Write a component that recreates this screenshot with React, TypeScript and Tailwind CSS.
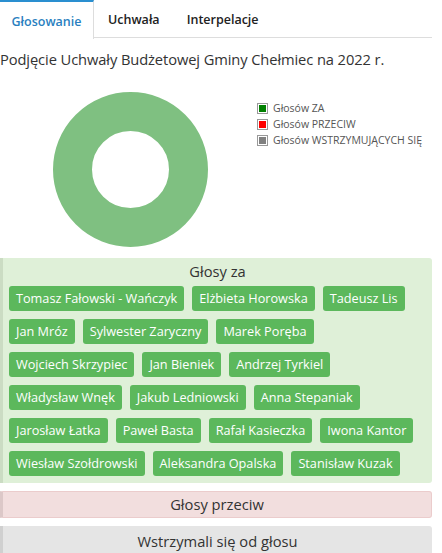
import React from "react";

const za = [
  "Tomasz Fałowski - Wańczyk",
  "Elżbieta Horowska",
  "Tadeusz Lis",
  "Jan Mróz",
  "Sylwester Zaryczny",
  "Marek Poręba",
  "Wojciech Skrzypiec",
  "Jan Bieniek",
  "Andrzej Tyrkiel",
  "Władysław Wnęk",
  "Jakub Ledniowski",
  "Anna Stepaniak",
  "Jarosław Łatka",
  "Paweł Basta",
  "Rafał Kasieczka",
  "Iwona Kantor",
  "Wiesław Szołdrowski",
  "Aleksandra Opalska",
  "Stanisław Kuzak",
];

export default function App() {
  return (
    <div className="w-[442px] h-[553px] overflow-hidden bg-white text-[#333]" style={{ fontFamily: '"Open Sans", sans-serif' }}>
      <div className="flex w-[432px] border-b border-[#ddd] h-[38px]">
        <div className="-mb-px h-[39px] w-[94px] border-t-2 border-t-[#2a8fd0] border-r border-r-[#ddd] bg-white flex items-center justify-center text-[12.5px] font-semibold text-[#2a7fc0] pt-[3px]">
          Głosowanie
        </div>
        <div className="h-[38px] pl-[14px] pr-[27px] flex items-center text-[12.5px] font-semibold text-[#222] pt-[3px]">Uchwała</div>
        <div className="h-[38px] flex items-center text-[12.5px] font-semibold text-[#222] pt-[3px]">Interpelacje</div>
      </div>
      <div className="mt-[11px] text-[14.7px] leading-[20px] tracking-[-0.1px]">Podjęcie Uchwały Budżetowej Gminy Chełmiec na 2022 r.</div>
      <div className="flex mt-[13px] h-[176px]">
        <div className="w-[257px] flex pl-[53px] pt-[10px]">
          <svg width="155" height="155" viewBox="0 0 155 155">
            <circle cx="77.5" cy="77.5" r="58" fill="none" stroke="#7fc081" strokeWidth="39" />
          </svg>
        </div>
        <div className="pt-[18px] text-[10.5px] leading-[16px] text-[#555]">
          {[
            ["#008000", "Głosów ZA"],
            ["#ff0000", "Głosów PRZECIW"],
            ["#808080", "Głosów WSTRZYMUJĄCYCH SIĘ"],
          ].map(([c, t]) => (
            <div key={t} className="flex items-center gap-[5px]">
              <span className="w-[11px] h-[11px] border border-[#999] flex items-center justify-center">
                <span className="w-[7px] h-[7px]" style={{ background: c }} />
              </span>
              <span>{t}</span>
            </div>
          ))}
        </div>
      </div>
      <div className="w-[432px] bg-[#dff0d8] border-l-[3px] border-l-[#cbdcc3] rounded-r-[3px] pt-[1px] pb-[7px]">
        <div className="text-center text-[14.7px] leading-[24px]">Głosy za</div>
        <div className="flex flex-wrap gap-x-[8px] gap-y-[8px] pl-[6px] pr-[4px] pt-[3px]">
          {za.map((n) => (
            <span key={n} className="bg-[#5cb85c] text-white text-[12.7px] leading-[25px] h-[25px] px-[7px] rounded-[3px] whitespace-nowrap">
              {n}
            </span>
          ))}
        </div>
      </div>
      <div className="mt-[8px] w-[432px] h-[27px] bg-[#f2dede] border-l-[3px] border-l-[#dcc8c8] border border-[#ebcccc] rounded-r-[3px] flex items-center justify-center text-[14.7px]">
        Głosy przeciw
      </div>
      <div className="mt-[8px] w-[432px] h-[30px] bg-[#e5e5e5] border-l-[3px] border-l-[#d0d0d0] rounded-r-[3px] flex items-center justify-center text-[14.7px]">
        Wstrzymali się od głosu
      </div>
    </div>
  );
}
